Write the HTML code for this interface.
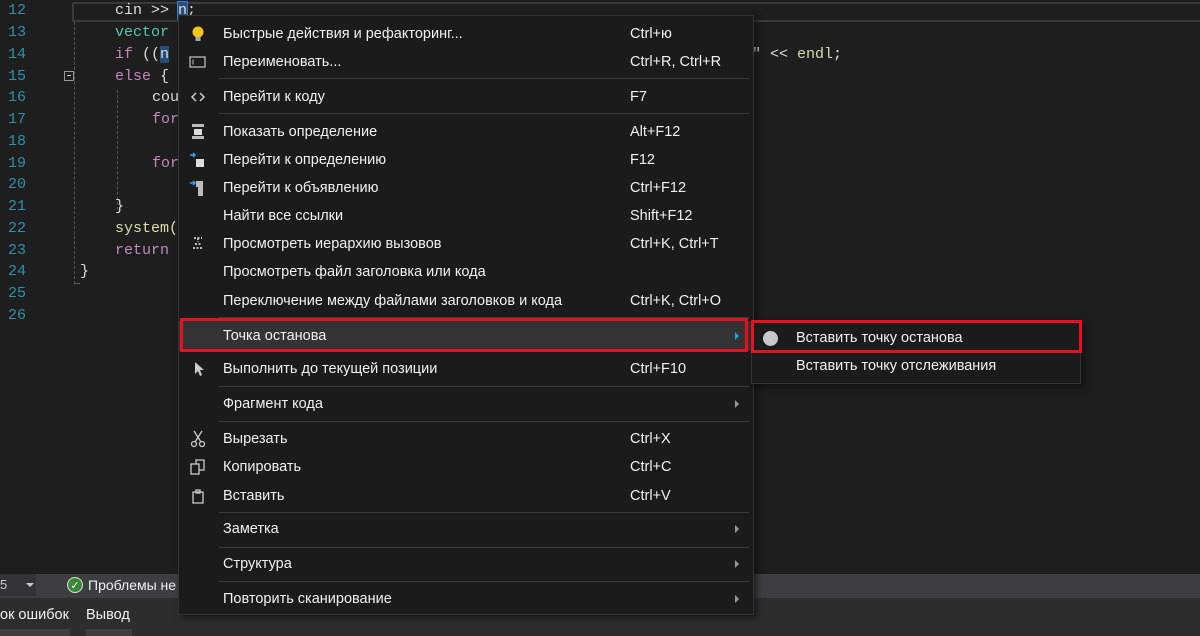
<!DOCTYPE html>
<html><head><meta charset="utf-8"><style>
*{margin:0;padding:0;box-sizing:border-box}
body{width:1200px;height:636px;overflow:hidden;background:#1e1e1e;position:relative;font-family:"Liberation Sans",sans-serif}
.code{position:absolute;left:0;top:0;font-family:"Liberation Mono",monospace;font-size:15px;white-space:pre}
.ln{position:absolute;left:8px;color:#2b91af;font-size:15px}
.cl{position:absolute;left:115px;color:#dcdcdc}
.k{color:#c586c0}.t{color:#4ec9b0}.f{color:#dcdcaa}.kw{color:#569cd6}
.menu{position:absolute;left:178px;top:15px;width:576px;height:600px;background:#1b1b1c;border:1px solid #333337;box-shadow:3px 3px 6px rgba(0,0,0,.5);color:#f1f1f1;font-size:14.5px}
.it{position:absolute;left:0;width:100%;height:26px;line-height:26px}
.it .l{position:absolute;left:44px}
.it .s{position:absolute;left:451px}
.it .a{position:absolute;left:556px;top:9px;width:0;height:0;border-left:4px solid #999;border-top:4px solid transparent;border-bottom:4px solid transparent}
.sep{position:absolute;left:40px;right:4px;height:1px;background:#3a3a3d}
.ic{position:absolute;left:10px;top:4px;width:18px;height:18px}
.red{position:absolute;border:3px solid #e81123}
</style></head><body>
<div style="position:absolute;left:72px;top:2px;width:1128px;height:20px;border:2px solid #3a3a3a;border-right:none"></div>
<div style="position:absolute;left:74px;top:22px;width:0;height:262px;border-left:1px dashed #555"></div>
<div style="position:absolute;left:74px;top:283px;width:6px;height:1px;background:#666"></div>
<div style="position:absolute;left:117px;top:90px;height:120px;border-left:1px dashed #555"></div>
<div style="position:absolute;left:64px;top:71px;width:10px;height:10px;border:1px solid #999;background:#1e1e1e"><div style="position:absolute;left:2px;top:3px;width:4px;height:1px;background:#ccc"></div></div>
<div class="code">
<div class="ln" style="top:2px">12</div><div class="ln" style="top:24px">13</div><div class="ln" style="top:46px">14</div><div class="ln" style="top:68px">15</div><div class="ln" style="top:89px">16</div><div class="ln" style="top:111px">17</div><div class="ln" style="top:133px">18</div><div class="ln" style="top:155px">19</div><div class="ln" style="top:176px">20</div><div class="ln" style="top:198px">21</div><div class="ln" style="top:220px">22</div><div class="ln" style="top:242px">23</div><div class="ln" style="top:263px">24</div><div class="ln" style="top:285px">25</div><div class="ln" style="top:307px">26</div>
<div class="cl" style="top:2px">cin &gt;&gt; <span style="background:#264f78;outline:1px solid #3a7bd5">n</span>;</div>
<div class="cl t" style="top:24px">vector</div>
<div class="cl" style="top:46px"><span class="k">if</span> ((<span style="background:#264f78">n</span></div>
<div class="cl" style="top:68px"><span class="k">else</span> {</div>
<div class="cl" style="top:89px;left:152px">cou</div>
<div class="cl k" style="top:111px;left:152px">for</div>
<div class="cl k" style="top:155px;left:152px">for</div>
<div class="cl" style="top:198px">}</div>
<div class="cl f" style="top:220px">system(</div>
<div class="cl k" style="top:242px">return</div>
<div class="cl" style="top:263px;left:80px">}</div>
<div class="cl" style="top:46px;left:752px">" &lt;&lt; <span class="f">endl</span>;</div>
</div>
<div style="position:absolute;left:0;top:574px;width:1200px;height:24px;background:#3e3e42"></div>
<div style="position:absolute;left:0;top:598px;width:1200px;height:38px;background:#2d2d30"></div>
<div style="position:absolute;left:0;top:574px;width:36px;height:22px;background:#333337;color:#ccc;font-size:13px;line-height:22px">5 <span style="position:absolute;left:26px;top:9px;border-top:4px solid #ccc;border-left:4px solid transparent;border-right:4px solid transparent"></span></div>
<div style="position:absolute;left:67px;top:577px;width:16px;height:16px;border-radius:50%;background:#388a34;color:#fff;font-size:11px;text-align:center;line-height:16px;border:1px solid #ddd">✓</div>
<div style="position:absolute;left:88px;top:577px;color:#f1f1f1;font-size:14px">Проблемы не</div>
<div style="position:absolute;left:0;top:607px;color:#f1f1f1;font-size:14.5px">ок ошибок</div>
<div style="position:absolute;left:86px;top:607px;color:#f1f1f1;font-size:14.5px">Вывод</div>
<div style="position:absolute;left:0;top:629px;width:70px;height:7px;background:#3e3e42"></div>
<div style="position:absolute;left:86px;top:629px;width:46px;height:7px;background:#3e3e42"></div>

<div class="menu">
<div class="it" style="top:5px"><svg class="ic" viewBox="0 0 18 18"><circle cx="9" cy="7" r="5.5" fill="#f5c518"/><rect x="6.5" y="12" width="5" height="4" fill="#aaa"/></svg><span class="l">Быстрые действия и рефакторинг...</span><span class="s">Ctrl+ю</span></div>
<div class="it" style="top:33px"><svg class="ic" viewBox="0 0 18 18"><rect x="1" y="4" width="15" height="10" fill="none" stroke="#bbb" stroke-width="1.3"/><line x1="4" y1="6.5" x2="4" y2="11.5" stroke="#bbb"/></svg><span class="l">Переименовать...</span><span class="s">Ctrl+R, Ctrl+R</span></div>
<div class="sep" style="top:62px"></div>
<div class="it" style="top:68px"><svg class="ic" viewBox="0 0 18 18"><path d="M7 5L3 9l4 4M11 5l4 4-4 4" fill="none" stroke="#ccc" stroke-width="1.5"/></svg><span class="l">Перейти к коду</span><span class="s">F7</span></div>
<div class="sep" style="top:97px"></div>
<div class="it" style="top:103px"><svg class="ic" viewBox="0 0 18 18"><rect x="3" y="1" width="12" height="3" fill="#bbb"/><rect x="5" y="6" width="8" height="6" fill="#ddd"/><rect x="3" y="13" width="12" height="3" fill="#bbb"/></svg><span class="l">Показать определение</span><span class="s">Alt+F12</span></div>
<div class="it" style="top:131px"><svg class="ic" viewBox="0 0 18 18"><path d="M1 4h5M4 2l2 2-2 2" stroke="#3ea0f0" stroke-width="1.5" fill="none"/><rect x="7" y="8" width="8" height="8" fill="#ddd"/></svg><span class="l">Перейти к определению</span><span class="s">F12</span></div>
<div class="it" style="top:159px"><svg class="ic" viewBox="0 0 18 18"><path d="M1 4h5M4 2l2 2-2 2" stroke="#3ea0f0" stroke-width="1.5" fill="none"/><path d="M7 2h7v15h-5v-9h-2z" fill="#bbb"/></svg><span class="l">Перейти к объявлению</span><span class="s">Ctrl+F12</span></div>
<div class="it" style="top:187px"><span class="l">Найти все ссылки</span><span class="s">Shift+F12</span></div>
<div class="it" style="top:215px"><svg class="ic" viewBox="0 0 18 18"><path d="M5 3h8M9 3v4M6 9h6M4 13h10" stroke="#bbb" stroke-width="2" stroke-dasharray="2 1.5" fill="none"/></svg><span class="l">Просмотреть иерархию вызовов</span><span class="s">Ctrl+K, Ctrl+T</span></div>
<div class="it" style="top:243px"><span class="l">Просмотреть файл заголовка или кода</span></div>
<div class="it" style="top:272px"><span class="l">Переключение между файлами заголовков и кода</span><span class="s">Ctrl+K, Ctrl+O</span></div>
<div class="sep" style="top:301px"></div>
<div class="it" style="top:305px;height:30px;line-height:30px;background:#333334"><span class="l">Точка останова</span><span class="a" style="top:11px;border-left-color:#3794ff"></span></div>
<div class="it" style="top:340px"><svg class="ic" viewBox="0 0 18 18"><path d="M6 2v12l3-3 2 5 2-1-2-5h4z" fill="#ccc"/></svg><span class="l">Выполнить до текущей позиции</span><span class="s">Ctrl+F10</span></div>
<div class="sep" style="top:370px"></div>
<div class="it" style="top:375px"><span class="l">Фрагмент кода</span><span class="a"></span></div>
<div class="sep" style="top:405px"></div>
<div class="it" style="top:410px"><svg class="ic" viewBox="0 0 18 18"><path d="M5 1l7 11M13 1L6 12" stroke="#ccc" stroke-width="1.3" fill="none"/><circle cx="5" cy="14" r="2.5" fill="none" stroke="#ccc" stroke-width="1.3"/><circle cx="13" cy="14" r="2.5" fill="none" stroke="#ccc" stroke-width="1.3"/></svg><span class="l">Вырезать</span><span class="s">Ctrl+X</span></div>
<div class="it" style="top:438px"><svg class="ic" viewBox="0 0 18 18"><rect x="2" y="6" width="8" height="10" fill="none" stroke="#ccc" stroke-width="1.3"/><path d="M7 6V2h8v10h-5" fill="none" stroke="#ccc" stroke-width="1.3"/></svg><span class="l">Копировать</span><span class="s">Ctrl+C</span></div>
<div class="it" style="top:467px"><svg class="ic" viewBox="0 0 18 18"><path d="M4 5h10v11H4z M7 3h4v3H7z" fill="none" stroke="#ccc" stroke-width="1.3"/></svg><span class="l">Вставить</span><span class="s">Ctrl+V</span></div>
<div class="sep" style="top:496px"></div>
<div class="it" style="top:500px"><span class="l">Заметка</span><span class="a"></span></div>
<div class="sep" style="top:531px"></div>
<div class="it" style="top:535px"><span class="l">Структура</span><span class="a"></span></div>
<div class="sep" style="top:565px"></div>
<div class="it" style="top:570px"><span class="l">Повторить сканирование</span><span class="a"></span></div>
</div>
<div class="red" style="left:180px;top:318px;width:568px;height:34px"></div>

<div style="position:absolute;left:751px;top:320px;width:330px;height:64px;background:#1b1b1c;border:1px solid #333337;box-shadow:3px 3px 6px rgba(0,0,0,.5);color:#f1f1f1;font-size:14.5px">
<div style="position:absolute;left:11px;top:10px;width:15px;height:15px;border-radius:50%;background:#c8c8c8"></div>
<div style="position:absolute;left:44px;top:9px">Вставить точку останова</div>
<div style="position:absolute;left:44px;top:37px">Вставить точку отслеживания</div>
</div>
<div class="red" style="left:751px;top:320px;width:331px;height:33px"></div>
</body></html>
